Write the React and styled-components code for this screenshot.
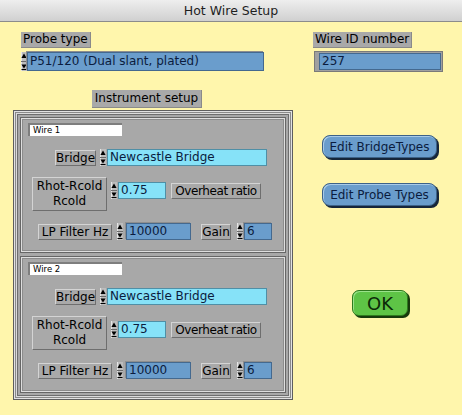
import React from "react";
import styled, { createGlobalStyle } from "styled-components";

const GlobalStyle = createGlobalStyle`
  html, body {
    margin: 0;
    padding: 0;
  }
  body {
    background: #fff6ac;
    font-family: "DejaVu Sans", Verdana, sans-serif;
  }
`;

const Window = styled.div`
  width: 462px;
  height: 415px;
  background: #fff6ac;
  overflow: hidden;
`;

const TitleBar = styled.div`
  height: 21px;
  border-bottom: 1px solid #8c8c8c;
  background: linear-gradient(#eeeeee, #d0d0d0);
  display: flex;
  align-items: center;
  justify-content: center;
  font-size: 12.5px;
  color: #1e1e1e;
`;

const Content = styled.div`
  display: flex;
`;

const LeftColumn = styled.div`
  width: 300px;
  display: flex;
  flex-direction: column;
  align-items: flex-start;
  padding-top: 10px;
`;

const RightColumn = styled.div`
  display: flex;
  flex-direction: column;
  align-items: flex-start;
  padding-top: 10px;
  margin-left: 13px;
`;

// grey caption tag
const Tag = styled.div`
  box-sizing: border-box;
  height: ${(p) => p.$h || 16}px;
  ${(p) => p.$w && `width: ${p.$w}px;`}
  margin-left: ${(p) => p.$left || 0}px;
  margin-top: ${(p) => p.$top || 0}px;
  padding: 0 2px;
  background: #a9a9a9;
  border-right: 1px solid #8a8a8a;
  border-bottom: 1px solid #8a8a8a;
  font-size: 12px;
  line-height: ${(p) => (p.$h || 16) - 1}px;
  color: #000;
  white-space: nowrap;
  text-align: center;
`;

// raised caption inside the grey panels
const PanelTag = styled.div`
  box-sizing: border-box;
  width: ${(p) => p.$w}px;
  height: ${(p) => p.$h || 16}px;
  margin-top: ${(p) => p.$top || 0}px;
  background: #a9a9a9;
  border: 1px solid;
  border-color: #d4d4d4 #6e6e6e #6e6e6e #d4d4d4;
  font-size: 12px;
  letter-spacing: ${(p) => (p.$tight ? "-0.4px" : "normal")};
  line-height: ${(p) => (p.$h || 16) - 2}px;
  color: #000;
  white-space: nowrap;
  text-align: center;
  display: flex;
  flex-direction: column;
  justify-content: center;
`;

const TwoLine = styled.span`
  line-height: 15px;
`;

const Field = styled.div`
  box-sizing: border-box;
  width: ${(p) => p.$w}px;
  height: ${(p) => p.$h || 17}px;
  background: ${(p) => (p.$light ? "#86e2f8" : "#6a9dcc")};
  border: 1px solid ${(p) => (p.$light ? "#4f8fa6" : "#44698f")};
  box-shadow: ${(p) => (p.$light ? "none" : "-1px -1px 0 #8e8e8e")};
  padding-left: 2px;
  font-size: 12px;
  line-height: ${(p) => (p.$h || 17) - 2}px;
  color: #0b1c3e;
  white-space: nowrap;
  overflow: hidden;
`;

const SpinSvg = styled.svg`
  display: block;
  flex: none;
  margin-right: ${(p) => p.$gap ?? 1}px;
`;

const Spinner = ({ h = 17, gap }) => (
  <SpinSvg width="6" height={h} viewBox={`0 0 6 ${h}`} $gap={gap}>
    <rect x="0" y="0" width="6" height={h} fill="#bdbdbd" />
    <rect x="0" y="0" width="1" height={h} fill="#e6e6e6" />
    <path d="M3 1.5 L5.6 6 L0.4 6 Z" fill="#000" />
    <rect x="0" y={h / 2 - 0.5} width="6" height="1" fill="#6a6a6a" />
    <path d={`M0.4 ${h - 6.5} L5.6 ${h - 6.5} L3 ${h - 2.5} Z`} fill="#000" />
    <rect x="0.5" y={h - 2} width="5" height="1" fill="#000" />
  </SpinSvg>
);

const Row = styled.div`
  display: flex;
  align-items: ${(p) => p.$align || "center"};
  margin-left: ${(p) => p.$indent || 0}px;
  margin-top: ${(p) => p.$top || 0}px;
`;

const Gap = styled.div`
  width: ${(p) => p.$w}px;
  flex: none;
`;

const IdFrame = styled.div`
  box-sizing: border-box;
  width: 129px;
  height: 21px;
  margin-left: 1px;
  margin-top: 3px;
  background: #a0a0a0;
  border: 1px solid #7a7a7a;
  padding: 1px 1px 1px 4px;
`;

const IdField = styled.div`
  box-sizing: border-box;
  height: 100%;
  background: #6a9dcc;
  border: 1px solid #44698f;
  padding-left: 2px;
  font-size: 12px;
  line-height: 15px;
  color: #0b1c3e;
`;

const Frame = styled.div`
  box-sizing: border-box;
  width: 280px;
  height: 290px;
  margin-left: 13px;
  margin-top: 2px;
  padding: 6px;
  background: #a8a8a8;
  border: 1px solid #5e5e5e;
  box-shadow: inset 0 0 0 1px #e2e2e2, inset 0 0 0 2px #8a8a8a,
    inset 0 0 0 3px #dcdcdc, inset 0 0 0 4px #6e6e6e;
  display: flex;
  flex-direction: column;
  gap: 3px;
`;

const Panel = styled.div`
  box-sizing: border-box;
  height: ${(p) => p.$h}px;
  border: 1px solid #666;
  box-shadow: inset 0 0 0 1px #dedede, inset 0 0 0 2px #8c8c8c;
  background: #a8a8a8;
  display: flex;
  flex-direction: column;
  align-items: flex-start;
`;

const NameBox = styled.div`
  box-sizing: border-box;
  width: 94px;
  height: 13px;
  margin-left: 7px;
  margin-top: 5px;
  background: #fff;
  border-top: 2px solid #7e7e7e;
  border-left: 2px solid #7e7e7e;
  padding-left: 3px;
  font-family: "DejaVu Sans", sans-serif;
  font-size: 8.5px;
  line-height: 11px;
  color: #000;
`;

const Button = styled.button`
  box-sizing: border-box;
  width: ${(p) => p.$w}px;
  height: ${(p) => p.$h}px;
  margin-left: ${(p) => p.$left || 0}px;
  margin-top: ${(p) => p.$top || 0}px;
  padding: 0;
  border-radius: ${(p) => p.$r || 8}px;
  border: 1px solid ${(p) => (p.$green ? "#2f7a1e" : "#3c6288")};
  background: ${(p) => (p.$green ? "#5ec446" : "#6a9dcc")};
  box-shadow: 2px 2px 0 ${(p) => (p.$green ? "#173a0c" : "#16263a")},
    inset 1px 1px 0 ${(p) => (p.$green ? "#9ae28a" : "#a9cbe8")};
  font-family: "DejaVu Sans", Verdana, sans-serif;
  font-size: ${(p) => p.$size || 12}px;
  color: ${(p) => (p.$green ? "#0c2a08" : "#0b1c3e")};
  cursor: pointer;
`;

const WirePanel = ({ name, h }) => (
  <Panel $h={h}>
    <NameBox>{name}</NameBox>
    <Row $indent={34} $top={13}>
      <PanelTag $w={41}>Bridge</PanelTag>
      <Gap $w={4} />
      <Spinner h={17} />
      <Field $w={160} $light>
        Newcastle Bridge
      </Field>
    </Row>
    <Row $indent={11} $top={11} $align="flex-start">
      <PanelTag $w={75} $h={34}>
        <TwoLine>Rhot-Rcold</TwoLine>
        <TwoLine>Rcold</TwoLine>
      </PanelTag>
      <Gap $w={4} />
      <Row $top={5}>
        <Spinner h={17} />
        <Field $w={48} $light>
          0.75
        </Field>
      </Row>
      <Gap $w={5} />
      <PanelTag $w={90} $top={6} $tight>
        Overheat ratio
      </PanelTag>
    </Row>
    <Row $indent={17} $top={12}>
      <PanelTag $w={74}>LP Filter Hz</PanelTag>
      <Gap $w={5} />
      <Spinner h={17} gap={3} />
      <Field $w={65}>10000</Field>
      <Gap $w={10} />
      <PanelTag $w={30}>Gain</PanelTag>
      <Gap $w={6} />
      <Spinner h={17} />
      <Field $w={28}>6</Field>
    </Row>
  </Panel>
);

function App() {
  return (
    <Window>
      <GlobalStyle />
      <TitleBar>Hot Wire Setup</TitleBar>
      <Content>
        <LeftColumn>
          <Tag $left={21}>Probe type</Tag>
          <Row $indent={21} $top={4}>
            <Spinner h={19} gap={0} />
            <Field $w={237} $h={19}>
              P51/120 (Dual slant, plated)
            </Field>
          </Row>
          <Tag $left={92} $top={19} $h={18} $w={110}>
            Instrument setup
          </Tag>
          <Frame>
            <WirePanel name="Wire 1" h={136} />
            <WirePanel name="Wire 2" h={137} />
          </Frame>
        </LeftColumn>
        <RightColumn>
          <Tag>Wire ID number</Tag>
          <IdFrame>
            <IdField>257</IdField>
          </IdFrame>
          <Button $w={115} $h={23} $left={9} $top={63}>
            Edit BridgeTypes
          </Button>
          <Button $w={115} $h={23} $left={9} $top={25}>
            Edit Probe Types
          </Button>
          <Button $w={56} $h={26} $left={39} $top={84} $green $size={18} $r={7}>
            OK
          </Button>
        </RightColumn>
      </Content>
    </Window>
  );
}

export default App;
